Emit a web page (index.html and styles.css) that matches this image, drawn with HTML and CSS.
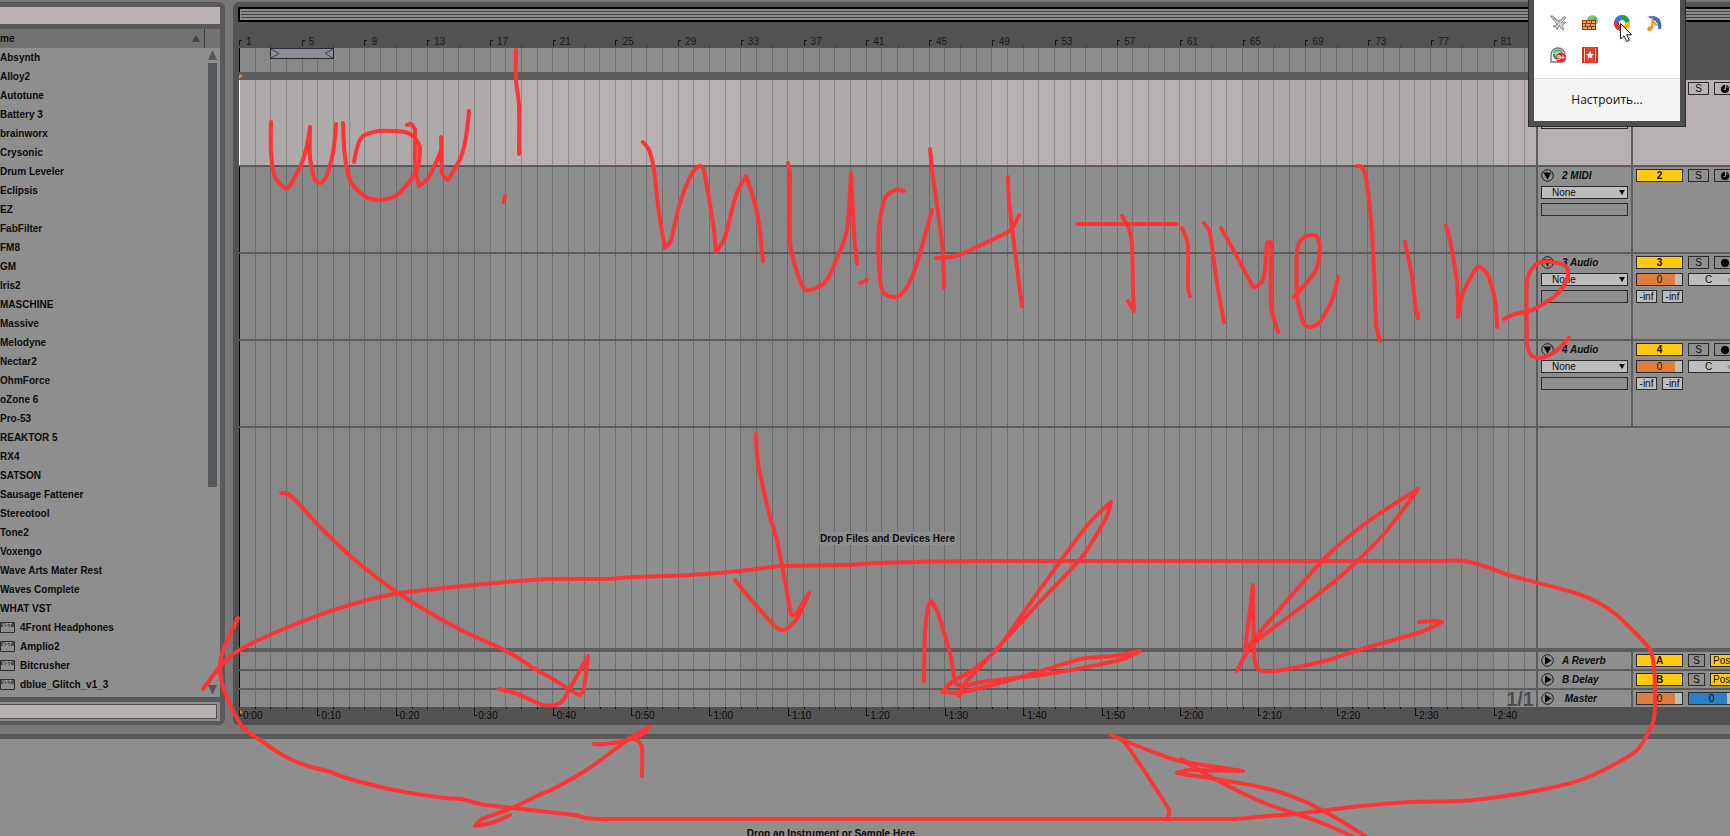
FILE: index.html
```html
<!DOCTYPE html>
<html lang="en">
<head>
    <meta charset="utf-8">
    <title>Arrangement</title>
    <link rel="stylesheet" href="styles.css">
</head>
<body>
    <div class="workspace">
        <aside class="browser">
            <input class="search" type="text" aria-label="Search">
            <div class="list-head">
                <span class="list-title">me</span>
                <span class="sort-arrow"></span>
                <span class="head-end"></span>
            </div>
            <div class="list-box">
                <ul class="list" id="plugin-list"></ul>
                <div class="scrollbar">
                    <span class="arrow-up"></span>
                    <span class="thumb"></span>
                    <span class="arrow-down"></span>
                </div>
            </div>
            <div class="filter-box">
                <input class="filter" type="text" aria-label="Filter">
            </div>
        </aside>

        <main class="arrangement">
            <div class="overview"><i></i><i></i><i></i></div>
            <div class="timeline">
                <div class="row ruler"><div class="bars" data-ruler="bars"></div></div>
                <div class="row scrub">
                    <div class="lane">
                        <div class="bars" data-grid></div>
                        <div class="loop">
                            <svg viewBox="0 0 8 9"><path d="M0 0L8 4.500L0 9"/></svg>
                            <svg viewBox="0 0 8 9"><path d="M8 0L0 4.500L8 9"/></svg>
                        </div>
                    </div>
                </div>
                <div class="row locators"><div class="locator-bar"><span class="marker"></span></div></div>

                <div class="row track selected">
                    <div class="lane"><div class="bars" data-grid></div></div>
                    <div class="head"><div class="slot"></div></div>
                    <div class="mixer">
                        <div class="mix-row">
                            <button class="btn solo">S</button>
                            <button class="btn rec" aria-label="Arm"><svg viewBox="0 0 8 8"><circle cx="4" cy="4" r="4"/><path class="note" d="M4.500 0v4.500H2.500M4.500 1l2 2"/></svg></button>
                        </div>
                    </div>
                </div>
                <div class="row track">
                    <div class="lane"><div class="bars" data-grid></div></div>
                    <div class="head">
                        <div class="name-row">
                            <button class="fold" aria-label="Fold"><svg viewBox="0 0 13 13"><circle cx="6.500" cy="6.500" r="5.800"/><path d="M2.500 3.500h8l-4 7z"/></svg></button>
                            <span class="name">2 MIDI</span>
                        </div>
                        <div class="pick"><select aria-label="2 MIDI"><option>None</option></select></div>
                        <div class="slot"></div>
                    </div>
                    <div class="mixer">
                        <div class="mix-row">
                            <button class="btn active">2</button>
                            <button class="btn solo">S</button>
                            <button class="btn rec" aria-label="Arm"><svg viewBox="0 0 8 8"><circle cx="4" cy="4" r="4"/><path class="note" d="M4.500 0v4.500H2.500M4.500 1l2 2"/></svg></button>
                        </div>
                    </div>
                </div>
                <div class="row track">
                    <div class="lane"><div class="bars" data-grid></div></div>
                    <div class="head">
                        <div class="name-row">
                            <button class="fold" aria-label="Fold"><svg viewBox="0 0 13 13"><circle cx="6.500" cy="6.500" r="5.800"/><path d="M2.500 3.500h8l-4 7z"/></svg></button>
                            <span class="name">3 Audio</span>
                        </div>
                        <div class="pick"><select aria-label="3 Audio"><option>None</option></select></div>
                        <div class="slot"></div>
                    </div>
                    <div class="mixer">
                        <div class="mix-row">
                            <button class="btn active">3</button>
                            <button class="btn solo">S</button>
                            <button class="btn rec" aria-label="Arm"><svg viewBox="0 0 8 8"><circle cx="4" cy="4" r="4"/></svg></button>
                        </div>
                        <div class="mix-row">
                            <input class="volume" type="text" value="0" aria-label="Volume 3">
                            <button class="btn pan">C<span class="pan-mark"></span></button>
                        </div>
                        <div class="mix-row">
                            <input class="send" type="text" value="-inf" aria-label="Send A 3">
                            <input class="send" type="text" value="-inf" aria-label="Send B 3">
                        </div>
                    </div>
                </div>
                <div class="row track">
                    <div class="lane"><div class="bars" data-grid></div></div>
                    <div class="head">
                        <div class="name-row">
                            <button class="fold" aria-label="Fold"><svg viewBox="0 0 13 13"><circle cx="6.500" cy="6.500" r="5.800"/><path d="M2.500 3.500h8l-4 7z"/></svg></button>
                            <span class="name">4 Audio</span>
                        </div>
                        <div class="pick"><select aria-label="4 Audio"><option>None</option></select></div>
                        <div class="slot"></div>
                    </div>
                    <div class="mixer">
                        <div class="mix-row">
                            <button class="btn active">4</button>
                            <button class="btn solo">S</button>
                            <button class="btn rec" aria-label="Arm"><svg viewBox="0 0 8 8"><circle cx="4" cy="4" r="4"/></svg></button>
                        </div>
                        <div class="mix-row">
                            <input class="volume" type="text" value="0" aria-label="Volume 4">
                            <button class="btn pan">C<span class="pan-mark"></span></button>
                        </div>
                        <div class="mix-row">
                            <input class="send" type="text" value="-inf" aria-label="Send A 4">
                            <input class="send" type="text" value="-inf" aria-label="Send B 4">
                        </div>
                    </div>
                </div>

                <div class="row empty">
                    <div class="lane">
                        <div class="bars" data-grid></div>
                        <span class="drop-hint">Drop Files and Devices Here</span>
                    </div>
                    <div class="head"></div>
                    <div class="mixer"></div>
                </div>

                <div class="row return">
                    <div class="lane"><div class="bars" data-grid></div></div>
                    <div class="head">
                        <div class="name-row">
                            <button class="fold" aria-label="Unfold"><svg viewBox="0 0 13 13"><circle cx="6.500" cy="6.500" r="5.800"/><path d="M4 2.500v8l6.500-4z"/></svg></button>
                            <span class="name">A Reverb</span>
                        </div>
                    </div>
                    <div class="mixer">
                        <div class="mix-row">
                            <button class="btn active">A</button>
                            <button class="btn small">S</button>
                            <button class="btn post">Post</button>
                        </div>
                    </div>
                </div>
                <div class="row return">
                    <div class="lane"><div class="bars" data-grid></div></div>
                    <div class="head">
                        <div class="name-row">
                            <button class="fold" aria-label="Unfold"><svg viewBox="0 0 13 13"><circle cx="6.500" cy="6.500" r="5.800"/><path d="M4 2.500v8l6.500-4z"/></svg></button>
                            <span class="name">B Delay</span>
                        </div>
                    </div>
                    <div class="mixer">
                        <div class="mix-row">
                            <button class="btn active">B</button>
                            <button class="btn small">S</button>
                            <button class="btn post">Post</button>
                        </div>
                    </div>
                </div>
                <div class="row return master">
                    <div class="lane">
                        <div class="bars" data-grid></div>
                        <span class="zoom-ratio">1/1</span>
                    </div>
                    <div class="head">
                        <div class="name-row">
                            <button class="fold" aria-label="Unfold"><svg viewBox="0 0 13 13"><circle cx="6.500" cy="6.500" r="5.800"/><path d="M4 2.500v8l6.500-4z"/></svg></button>
                            <span class="name">&nbsp;Master</span>
                        </div>
                    </div>
                    <div class="mixer">
                        <div class="mix-row">
                            <input class="volume" type="text" value="0" aria-label="Master volume">
                            <input class="volume cue" type="text" value="0" aria-label="Cue volume">
                        </div>
                    </div>
                </div>
                <div class="row time"><div class="time-lane"><span class="marker"></span><div class="bars" data-ruler="time"></div></div></div>
            </div>
        </main>
    </div>

    <section class="devices">
        <span>Drop an Instrument or Sample Here</span>
    </section>

    <div class="tray">
        <div class="tray-icons">
            <svg viewBox="0 0 16 16">
                <path d="M.5 1l2 0 5 4 2.500.5 4-4 1.500.5-1 2.500-3 3 1.500.5 2-1 .5 1-3 2 1 5-1.500-.5-3-4-2 4-1-2.500-3-.5 4-2-2-3z" fill="#d8d8d8" stroke="#7a7a7a" stroke-width=".9"/>
                <path d="M3 3l6 4M7 10l6-7" stroke="#9a9a9a" fill="none"/>
            </svg>
            <svg viewBox="0 0 16 16">
                <circle cx="10.500" cy="5.500" r="5.300" fill="#4aa3e0"/>
                <path d="M7 2q4-3 7 1l-3 1-1 3-3-2zM13 6l2-1v4h-3z" fill="#7ccf2a"/>
                <path d="M0 5h14v10H0z" fill="#8e3d10"/>
                <path d="M1 6h3v2H1zM5 6h4v2H5zM10 6h3v2h-3zM1 9h2v2H1zM4 9h4v2H4zM9 9h4v2H9zM1 12h4v2H1zM6 12h3v2H6zM10 12h3v2h-3z" fill="#eea165"/>
            </svg>
            <svg viewBox="0 0 16 16">
                <g fill="none" stroke-width="5">
                    <path d="M2.500 8A5.500 5.500 0 0 1 8 2.500" stroke="#2f7de1"/>
                    <path d="M7 2.500A5.500 5.500 0 0 1 13.500 8" stroke="#1aa34a"/>
                    <path d="M13.500 7A5.500 5.500 0 0 1 8 13.500" stroke="#f7b90f"/>
                    <path d="M9 13.500A5.500 5.500 0 0 1 2.500 7" stroke="#e5302a"/>
                </g>
            </svg>
            <svg viewBox="0 0 16 16">
                <path d="M1 2q9-3 13 3 2 4 1 9l-3 0q1-6-4-9-3-2-7-3z" fill="#3c6fc0"/>
                <path d="M6 1q1 5 6 9l-2 1-3-3 0 5q-1 3-4 3-3-1-1-4l3-1z" fill="#ff8a1c"/>
            </svg>
            <svg viewBox="0 0 16 16">
                <path d="M1 15V8a7 7 0 1 1 7 7z" fill="#f2f2f2" stroke="#777" stroke-width="1.400"/>
                <circle cx="8" cy="7.500" r="5.200" fill="#2f9c6b"/>
                <path d="M3 6q5-5 10 0-5 0-6 4z" fill="#8ad7b0"/>
                <circle cx="11" cy="10.800" r="5" fill="#e3252b"/>
                <text x="7" y="13">9+</text>
            </svg>
            <svg viewBox="0 0 16 16">
                <path d="M0 0h16v16H0z" fill="#c8351f"/>
                <path d="M2 1h1v14H2zM13 1h1v14h-1z" fill="#fbd9a8"/>
                <path d="M4 0h8v16H4z" fill="#ea3c2c"/>
                <path d="M8 4l1.200 2.700 2.800.3-2.100 1.900.6 2.900L8 10.300l-2.500 1.500.6-2.900L4 7l2.800-.3z" fill="#fff"/>
            </svg>
        </div>
        <a class="customize" href="#">Настроить...</a>
        <svg class="pointer" viewBox="0 0 13 20"><path d="M.5.500v15.500l3.500-3.300 2.600 5.800 2.700-1.200-2.600-5.600h5z"/></svg>
    </div>

    <svg class="scribble" id="scribble" viewBox="0 0 1730 836" preserveAspectRatio="none"></svg>

    <script>
var plugins = ["Absynth", "Alloy2", "Autotune", "Battery 3", "brainworx", "Crysonic", "Drum Leveler",
    "Eclipsis", "EZ", "FabFilter", "FM8", "GM", "Iris2", "MASCHINE", "Massive", "Melodyne", "Nectar2",
    "OhmForce", "oZone 6", "Pro-53", "REAKTOR 5", "RX4", "SATSON", "Sausage Fattener", "Stereotool",
    "Tone2", "Voxengo", "Wave Arts Mater Rest", "Waves Complete", "WHAT VST"];
var vsts = ["4Front Headphones", "Amplio2", "Bitcrusher", "dblue_Glitch_v1_3"];
var vstIcon = '<svg class="vst" viewBox="0 0 15 11"><path d="M.5.500h14v10H.5z"/><path class="band" d="M1 1h13v4H1z"/><text x="2" y="5">VST</text></svg>';

var list = document.getElementById("plugin-list");
plugins.forEach(name => {
    list.innerHTML += `<li>${name}</li>`;
});
vsts.forEach(name => {
    list.innerHTML += `<li>${vstIcon}${name}</li>`;
});

// 82 bars, shaded in blocks of 16
var BARS = 82;

document.querySelectorAll("[data-grid]").forEach(grid => {
    var html = "";
    for (var i = 0; i < BARS; i++) {
        html += Math.floor(i / 16) % 2 == 0 ? '<i class="shade"></i>' : "<i></i>";
    }
    grid.innerHTML = html;
});

document.querySelectorAll("[data-ruler]").forEach(ruler => {
    var html = "";
    for (var i = 0; i < BARS; i++) {
        if (ruler.dataset.ruler == "bars") {
            if (i % 4 == 0) html += `<b><span>${i + 1}</span></b>`;
            else html += i % 2 == 0 ? '<b class="dot"></b>' : "<b></b>";
        } else {
            var sec = i * 2;
            var label = Math.floor(sec / 60) + ":" + (sec % 60).toString().padStart(2, "0");
            html += i % 5 == 0 ? `<b><span>${label}</span></b>` : '<b class="dot"></b>';
        }
    }
    ruler.innerHTML = html;
});

// freehand pen strokes, x,y pairs
var strokes = [
    "271,122 271,153 275,177 285,188 289,187 301,165 307,145 310,127 310,157 314,178 320,183 326,177 333,153 336,124",
    "343,123 345,157 351,182 366,197 380,200 397,195 416,172 420,148 414,137 405,132 379,131 361,138 354,162",
    "407,125 411,124 415,130 415,167 419,186 429,177 441,150 441,137 442,173 448,180 461,157 466,137 469,111",
    "516,50 516,80 519,105 519,154",
    "505,196 504,202",
    "643,142 649,150 654,170 659,213 665,248 671,240 680,203 691,175 699,166 704,170 713,223 716,252 725,237 736,195 746,176 757,212 763,261",
    "788,163 790,177 790,242 798,275 806,290 820,286 827,280 837,258 847,230 851,173 854,233 857,264",
    "860,283 867,280",
    "904,191 896,190 885,198 879,227 879,267 883,292 896,297 907,287 917,263 932,210",
    "930,149 933,177 942,243 944,288",
    "936,258 959,255 1006,233 1013,227 1019,215",
    "1008,177 1009,200 1015,252 1022,306",
    "1077,224 1177,224",
    "1122,216 1129,229 1132,245 1133,290 1134,311 1128,301",
    "1182,228 1188,245 1188,287 1190,296",
    "1204,223 1210,233 1217,283 1224,322",
    "1221,228 1236,255 1252,285 1255,287 1262,282 1265,270 1267,243 1271,243 1271,305 1278,332",
    "1294,297 1316,270 1320,247 1317,237 1311,235 1302,239 1297,250 1297,297 1304,324 1311,327 1320,322 1332,300 1338,277",
    "1357,166 1362,167 1366,178 1371,220 1374,270 1376,323 1380,341",
    "1405,242 1412,277 1416,312 1418,318 1418,313",
    "1446,226 1450,240 1457,282 1458,317 1463,293 1475,270 1480,267 1488,275 1495,300 1497,327",
    "1504,319 1515,314 1532,310 1555,296 1567,280 1567,268 1558,263 1538,263 1527,280 1527,343 1531,355 1540,358 1555,352 1569,338",
    "281,493 288,494 300,505 318,525 355,560 398,593 457,628 500,648 520,659 533,668 551,678 579,695 584,688 588,656 569,690 560,703 543,705 518,694 499,689",
    "238,618 224,648 220,667 224,690 241,725 263,742 286,757 308,766 331,772 343,777 394,790 445,798 461,799 486,805 575,815 586,818 610,819 840,819 1232,819 1268,816 1295,814 1361,806 1410,802 1460,801 1498,797 1545,789 1586,778 1635,752 1652,725 1655,707 1654,667 1649,648 1619,617 1597,602 1572,592 1512,576 1487,567 1464,561 1440,561 977,561 878,563 847,565 783,566 740,571 690,575 633,577 604,579 551,579 506,582 400,593 343,607 286,628 241,649 224,662 203,689",
    "756,434 758,463 769,513 777,540 786,587 791,614 796,614 809,593 798,617 788,628 782,630 777,628 753,602 735,580",
    "510,815 494,822 475,826 482,819 512,808 537,796 553,789 588,769 629,739 649,727 641,735 624,741 604,744 594,744",
    "629,738 637,740 642,748 642,776",
    "924,681 925,633 928,607 931,601 938,613 950,653 955,682 963,686 988,681 1054,673 1120,660 1140,651 1114,656 1081,659 1021,677 963,692 942,692 952,682 977,667 999,647 1024,612 1059,563 1076,540 1092,520 1111,502 1106,518 1081,558 1035,607 993,653 966,682 959,696",
    "1237,671 1254,643 1295,612 1342,575 1383,535 1418,489 1366,523 1325,558 1279,610 1245,650 1253,585 1254,653 1258,669 1276,671 1325,661 1355,651 1421,632 1442,622 1436,621 1419,622",
    "1168,817 1169,810 1147,775 1125,743 1111,735 1153,752 1180,761 1243,771 1190,770 1177,773 1240,783 1273,790 1306,802 1336,818 1368,838",
    "1181,759 1213,778 1262,802 1317,821 1356,838"
];

// tangent at point i, flat where the pen turns back on itself
function tangent(p, i) {
    if (i == 0 || i == p.length - 1) return [0, 0];
    var ax = p[i][0] - p[i - 1][0], ay = p[i][1] - p[i - 1][1];
    var bx = p[i + 1][0] - p[i][0], by = p[i + 1][1] - p[i][1];
    if (ax * bx + ay * by < 0) return [0, 0];
    var la = Math.hypot(ax, ay), lb = Math.hypot(bx, by);
    var k = Math.min(la, lb) / (la + lb) / 3;
    return [(ax + bx) * k, (ay + by) * k];
}

strokes.forEach(stroke => {
    var p = stroke.split(" ").map(s => s.split(",").map(Number));
    var d = "M" + p[0];
    for (var i = 1; i < p.length; i++) {
        var t0 = tangent(p, i - 1), t1 = tangent(p, i);
        d += `C${p[i - 1][0] + t0[0]},${p[i - 1][1] + t0[1]} ${p[i][0] - t1[0]},${p[i][1] - t1[1]} ${p[i]}`;
    }
    var path = document.createElementNS("http://www.w3.org/2000/svg", "path");
    path.setAttribute("d", d);
    document.getElementById("scribble").appendChild(path);
});
    </script>
</body>
</html>
```
FILE: styles.css
```css
* {
    box-sizing: border-box;
}

body {
    margin: 0;
    height: 100vh;
    display: flex;
    flex-direction: column;
    position: relative;
    overflow: hidden;
    background: #787878;
    color: #0c0c0c;
    font-family: "Liberation Sans", Arial, sans-serif;
    font-size: 10px;
    line-height: 11px;
}

button,
input,
select {
    font: inherit;
    color: inherit;
    margin: 0;
    padding: 0;
    border-radius: 0;
    appearance: none;
}

svg {
    display: block;
}

.workspace {
    display: flex;
    flex: none;
    gap: 8px;
    padding: 2px 0 9px;
}

/* browser */
.browser {
    width: 225px;
    flex: none;
    display: flex;
    flex-direction: column;
    gap: 5px;
    padding: 5px 5px 4px 0;
    background: #5a5a5a;
    border-radius: 0 6px 6px 0;
}

.search {
    width: 100%;
    height: 17px;
    border: none;
    background: #b7b1b0;
}

.list-head {
    display: flex;
    align-items: center;
    height: 19px;
    background: #73716f;
    font-weight: bold;
}

.list-title {
    flex: 1;
}

.sort-arrow {
    border: 4px solid transparent;
    border-top: none;
    border-bottom: 7px solid #464646;
    margin-right: 4px;
}

.head-end {
    width: 16px;
    height: 19px;
    border-left: 1px solid #3c3c3c;
}

.list-box {
    display: flex;
    margin-top: -5px;
    padding-bottom: 3px;
    background: #8e8e8e;
}

.list {
    flex: 1;
    margin: 0;
    padding: 0;
    list-style: none;
    font-weight: bold;
}

.list li {
    display: flex;
    align-items: center;
    gap: 5px;
    height: 19px;
    padding-bottom: 1px;
}

.vst {
    width: 15px;
    height: 11px;
    fill: none;
    stroke: #2c2c2c;
}

.vst .band {
    fill: #4a4a4a;
    stroke: none;
}

.vst text {
    font-size: 5px;
    fill: #b4b4b4;
    stroke: none;
}

.scrollbar {
    width: 9px;
    margin-right: 3px;
    padding-top: 3px;
    display: flex;
    flex-direction: column;
    gap: 3px;
}

.arrow-up,
.arrow-down {
    border: 4px solid transparent;
}

.arrow-up {
    border-top: none;
    border-bottom: 9px solid #54585b;
}

.arrow-down {
    border-bottom: none;
    border-top: 9px solid #54585b;
    margin-top: auto;
}

.thumb {
    height: 66%;
    background: #54585b;
}

.filter-box {
    height: 19px;
    padding: 2px 3px 2px 0;
    background: #8e8e8e;
}

.filter {
    display: block;
    width: 100%;
    height: 15px;
    border: 1px solid #505050;
    border-left: none;
    background: #b7b1b0;
}

/* arrangement */
.arrangement {
    flex: 1;
    min-width: 0;
    padding: 5px 0 0 5px;
    background: #535353;
    border-radius: 6px 0 0 6px;
}

.overview {
    height: 15px;
    padding: 2px 0 0 1px;
    display: flex;
    flex-direction: column;
    gap: 2px;
    border: 2px solid #000;
    border-right: none;
    background: #8e8e8e;
}

.overview i {
    height: 1px;
    background: #404040;
}

.timeline {
    padding-left: 1px;
}

.row {
    display: grid;
    grid-template-columns: minmax(0, 1fr) 95px 99px;
}

.bars {
    display: grid;
    grid-template-columns: repeat(82, minmax(0, 1fr));
    margin-right: 11px;
    height: 100%;
}

.lane {
    position: relative;
    background: #8e8e8e;
}

.lane .bars {
    border-right: 1px solid rgba(0, 0, 0, .2);
}

.lane .bars i {
    border-left: 1px solid rgba(0, 0, 0, .2);
}

.lane .bars .shade {
    background: rgba(0, 0, 0, .04);
}

.lane .bars i:first-child {
    border-left-color: #000;
}

.ruler {
    height: 26px;
    color: #1a1a1a;
}

.ruler b,
.time b {
    display: flex;
    font-weight: normal;
    white-space: nowrap;
    grid-row: 1;
}

.ruler b {
    align-items: flex-end;
    padding-bottom: 1px;
}

.ruler span,
.time span {
    display: flex;
}

.ruler span {
    align-items: flex-end;
    gap: 4px;
}

.ruler span::before {
    content: "";
    width: 2px;
    height: 5px;
    margin-bottom: 1px;
    border: 1px solid #1a1a1a;
    border-width: 1px 0 0 1px;
}

.ruler .dot::before {
    content: "";
    width: 1px;
    height: 1px;
    background: #222;
}

.scrub {
    height: 24px;
}

.loop {
    position: absolute;
    top: 0;
    left: calc(100% * 2 / 83);
    width: 64px;
    height: 11px;
    display: flex;
    justify-content: space-between;
    border: 1px solid #262b38;
    background: #8e8d93;
}

.loop svg {
    width: 8px;
    height: 9px;
    fill: none;
    stroke: #3a4050;
}

.locator-bar {
    height: 8px;
    padding-top: 3px;
    background: #5c5c5c;
}

.marker {
    display: block;
    width: 4px;
    height: 4px;
    background: #f5821e;
    clip-path: polygon(0 0, 100% 0, 0 100%);
}

.track {
    height: 87px;
    border-bottom: 2px solid #5c5c5c;
}

.head,
.mixer {
    display: flex;
    flex-direction: column;
    gap: 4px;
    padding: 2px 3px;
    border-left: 2px solid #5c5c5c;
    background: #8e8e8e;
    overflow: hidden;
}

.selected .lane,
.selected .head,
.selected .mixer {
    background: #b6b1b0;
}

.selected .lane .bars i:first-child {
    border-left-color: #fff;
}

.selected .head {
    padding-top: 36px;
}

.selected .mix-row {
    padding-left: 52px;
}

.name-row {
    display: flex;
    align-items: center;
    gap: 8px;
    height: 13px;
}

.name {
    font-weight: bold;
    font-style: italic;
    white-space: nowrap;
}

.fold {
    width: 13px;
    height: 13px;
    border: none;
    background: none;
}

.fold svg {
    width: 13px;
    height: 13px;
}

.fold circle {
    fill: none;
    stroke: #1c1c1c;
}

.pick {
    position: relative;
    display: flex;
}

.pick::after {
    content: "";
    position: absolute;
    top: 4px;
    right: 3px;
    border: 3px solid transparent;
    border-top: 5px solid #0c0c0c;
    border-bottom: none;
}

.pick select {
    width: 87px;
    height: 13px;
    padding-left: 10px;
    border: 1px solid #2c2c2c;
    background: #bdbdbd;
    line-height: 11px;
}

.slot {
    width: 87px;
    height: 13px;
    border: 1px solid #2c2c2c;
}

.mix-row {
    display: flex;
    gap: 5px;
}

.btn,
.volume,
.send {
    flex: none;
    height: 13px;
    border: 1px solid #2c2c2c;
    text-align: center;
    line-height: 11px;
}

.btn {
    background: none;
}

.active {
    width: 47px;
    background: #ffc90e;
    font-weight: bold;
}

.solo,
.rec {
    width: 21px;
}

.rec svg {
    width: 8px;
    height: 8px;
    margin: 0 auto;
}

.rec .note {
    fill: none;
    stroke: #a5a5a5;
}

.small {
    width: 17px;
}

.post {
    width: 30px;
    padding-left: 2px;
    background: #ffc90e;
    text-align: left;
}

.volume {
    width: 47px;
    background: linear-gradient(90deg, #df7e3c 84%, #bdbdbd 84%);
}

.cue {
    background: linear-gradient(90deg, #2a80c8 84%, #bdbdbd 84%);
}

.pan {
    display: flex;
    align-items: center;
    width: 47px;
    padding-left: 16px;
    gap: 15px;
    background: #bdbdbd;
}

.pan-mark {
    border: 3px solid transparent;
    border-left: none;
    border-right: 4px solid #8e8e8e;
}

.send {
    width: 21px;
    background: #bdbdbd;
}

.empty {
    height: 220px;
}

.empty .mixer {
    border-left-color: transparent;
}

.drop-hint {
    position: absolute;
    top: 104px;
    left: 50%;
    transform: translateX(-50%);
    padding: 1px;
    background: #8e8e8e;
    font-weight: bold;
    white-space: nowrap;
}

.return {
    height: 19px;
    border-top: 2px solid #5c5c5c;
}

.empty + .return {
    height: 21px;
    border-top-width: 4px;
}

.zoom-ratio {
    position: absolute;
    right: 2px;
    bottom: 0;
    color: #4c4c4c;
    font-size: 20px;
    font-weight: bold;
    line-height: 16px;
}

.time {
    height: 18px;
    color: #0c0c0c;
}

.time-lane {
    position: relative;
}

.time .marker {
    position: absolute;
    top: 2px;
    left: 0;
    clip-path: polygon(0 0, 100% 100%, 0 100%);
}

.time span {
    gap: 1px;
    padding-top: 3px;
}

.time span::before {
    content: "";
    width: 2px;
    height: 7px;
    margin-top: -2px;
    border: 1px solid #141414;
    border-width: 0 0 1px 1px;
}

.time .dot::before {
    content: "";
    width: 1px;
    height: 2px;
    background: #141414;
}

/* device view */
.devices {
    flex: 1;
    min-height: 0;
    padding: 89px 68px 0 0;
    border-top: 5px solid #5a5a5a;
    background: #8e8e8e;
    text-align: center;
    font-weight: bold;
}

/* tray popup */
.tray {
    position: absolute;
    top: 0;
    right: 44px;
    width: 158px;
    padding: 0 5px 5px;
    border: 1px solid #2b2b2b;
    border-top: none;
    background: #505050;
}

.tray-icons {
    display: grid;
    grid-template-columns: repeat(4, 16px);
    gap: 16px;
    padding: 15px 16px;
    background: #fff;
}

.tray-icons svg {
    width: 16px;
    height: 16px;
}

.tray-icons text {
    fill: #fff;
    font-size: 7px;
    font-weight: bold;
}

.customize {
    display: block;
    height: 43px;
    border-top: 1px solid #d9d9d9;
    background: #f4f4f4;
    color: #111;
    font: 12px/42px "Open Sans", "Noto Sans", sans-serif;
    text-align: center;
    text-decoration: none;
}

.pointer {
    position: absolute;
    left: 91px;
    top: 23px;
    width: 13px;
    height: 20px;
    fill: #fff;
    stroke: #1b1b2b;
}

/* pen layer */
.scribble {
    position: absolute;
    inset: 0;
    width: 100%;
    height: 100%;
    fill: none;
    stroke: #ff3434;
    stroke-width: 4px;
    stroke-linecap: round;
    stroke-linejoin: round;
    pointer-events: none;
}
```
